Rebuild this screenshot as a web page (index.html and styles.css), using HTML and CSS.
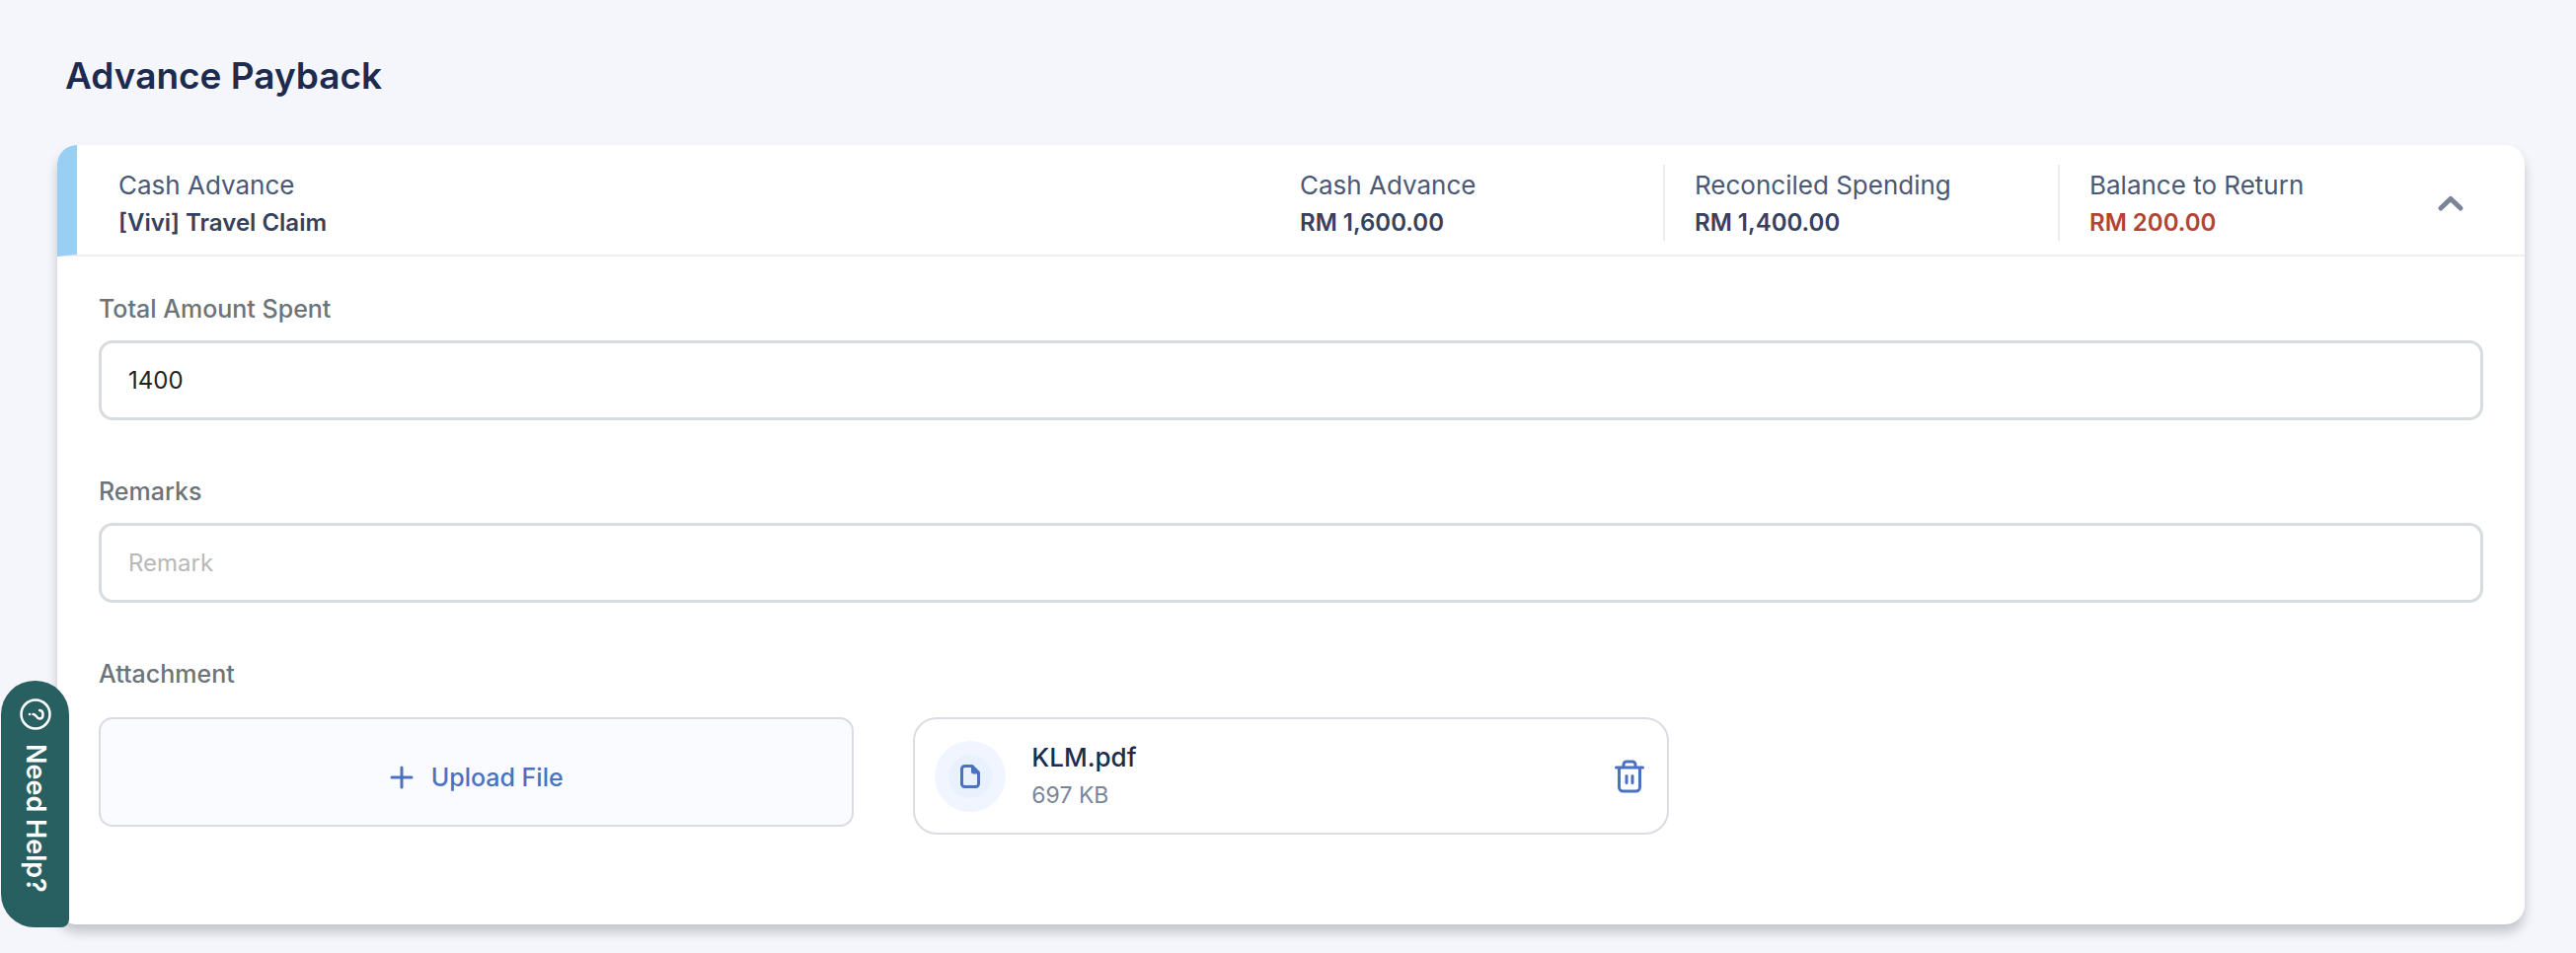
FILE: index.html
```html
<!DOCTYPE html>
<html lang="en">
<head>
<meta charset="UTF-8" />
<meta name="viewport" content="width=device-width, initial-scale=1" />
<title>Advance Payback</title>
<link rel="stylesheet" href="styles.css">
</head>
<body>
  <main class="page">
    <h1 class="page-title">Advance Payback</h1>

    <section class="card">
      <header class="card-header">
        <div class="summary summary-main">
          <span class="summary-label">Cash Advance</span>
          <strong class="summary-value">[Vivi] Travel Claim</strong>
        </div>
        <div class="summary">
          <span class="summary-label">Cash Advance</span>
          <strong class="summary-value">RM 1,600.00</strong>
        </div>
        <div class="summary divided">
          <span class="summary-label">Reconciled Spending</span>
          <strong class="summary-value">RM 1,400.00</strong>
        </div>
        <div class="summary summary-last divided">
          <span class="summary-label">Balance to Return</span>
          <strong class="summary-value negative">RM 200.00</strong>
        </div>
        <button class="icon-btn toggle-btn" type="button" aria-label="Collapse">
          <svg width="28" height="20" viewBox="0 0 28 20" fill="none" stroke="#7b8599" stroke-width="5" stroke-linecap="round" stroke-linejoin="round"><path d="M4 15 14 5.500 24 15"/></svg>
        </button>
      </header>

      <form class="card-body">
        <div class="field">
          <label for="amount">Total Amount Spent</label>
          <input type="text" id="amount" value="1400" />
        </div>
        <div class="field">
          <label for="remark">Remarks</label>
          <input type="text" id="remark" placeholder="Remark" />
        </div>

        <h2 class="attachment-title">Attachment</h2>
        <div class="attachments">
          <button class="upload-btn" type="button">
            <svg width="24" height="28" viewBox="0 0 24 28" fill="none" stroke="#4a72c0" stroke-width="3" stroke-linecap="round"><path d="M12 4v20M2 14h20"/></svg>
            Upload File
          </button>
          <div class="file">
            <span class="file-icon">
              <svg width="20" height="24" viewBox="0 0 20 24"><path d="M4 1.500h8L18.500 8v11.500a3 3 0 0 1-3 3H4.500a3 3 0 0 1-3-3v-15a3 3 0 0 1 3-3z" fill="none" stroke="#4a72c0" stroke-width="3" stroke-linejoin="round"/><path d="M11 1.500V7a2.500 2.500 0 0 0 2.500 2.500h5V8L12 1.500z" fill="#4a72c0"/></svg>
            </span>
            <div class="file-info">
              <span class="file-name">KLM.pdf</span>
              <span class="file-size">697 KB</span>
            </div>
            <button class="icon-btn" type="button" aria-label="Delete KLM.pdf">
              <svg width="30" height="34" viewBox="0 0 30 34" fill="none" stroke="#4a72c0" stroke-width="3" stroke-linecap="round" stroke-linejoin="round"><path d="M1.500 8h27M4.500 8v20a4 4 0 0 0 4 4h13a4 4 0 0 0 4-4V8M9 8V5a3 3 0 0 1 3-3h6a3 3 0 0 1 3 3v3M12 16.500v7M18 16.500v7"/></svg>
            </button>
          </div>
        </div>
      </form>
    </section>
  </main>

  <button class="help-btn" type="button">
    <svg width="32" height="32" viewBox="0 0 32 32" fill="none" stroke="#fff" stroke-width="2.500" stroke-linecap="round"><circle cx="16" cy="16" r="14.500"/><path d="M10 16h.1M13.500 16c3.500-.5 3 4.500 6.500 4.500 2.500 0 3.500-1.800 3.500-4.300 0-2.400-1.300-4-3.300-4.200" /></svg>
    <span>Need Help?</span>
  </button>
</body>
</html>
```

FILE: styles.css
```css
/* Reset & base */
* {
  box-sizing: border-box;
}
body {
  margin: 0;
  min-height: 100vh;
  font-family: Inter, 'Liberation Sans', sans-serif;
  font-size: 26px;
  line-height: 32px;
  color: #1d2b4f;
  background: #f5f6fc;
}
button,
input {
  font: inherit;
}
button {
  cursor: pointer;
}

.page {
  padding: 53px 52px 28px 58px;
}
.page-title {
  margin: 0 0 46px;
  padding-left: 8px;
  font-size: 37px;
  line-height: 48px;
  font-weight: 600;
}

/* Card */
.card {
  background: #fff;
  border-radius: 20px;
  box-shadow: 0 8px 12px rgba(0, 0, 0, 0.2);
}
.card-header {
  display: flex;
  align-items: center;
  padding: 20px 61px 14px 0;
  border-left: 20px solid #99cff2;
  border-bottom: 2px solid #f0f0f1;
  border-radius: 20px 20px 0 0;
}
.summary {
  display: flex;
  flex-direction: column;
  gap: 4px;
  width: 400px;
  height: 77px;
  padding: 3px 0 0 32px;
}
.summary-main {
  flex: 1;
  padding-left: 42px;
}
.summary-last {
  width: 384px;
}
.divided {
  padding-left: 30px;
  border-left: 2px solid #ededf0;
}
.summary-label {
  font-size: 26px;
  line-height: 36px;
  color: #4a5875;
}
.summary-value {
  font-size: 24px;
  font-weight: 600;
  color: #34415f;
}
.negative {
  color: #b04438;
}
.icon-btn {
  display: flex;
  padding: 0;
  border: none;
  background: none;
}

/* Form */
.card-body {
  padding: 37px 42px 91px;
}
.field {
  display: flex;
  flex-direction: column;
  gap: 16px;
  margin-bottom: 56px;
}
.field label,
.attachment-title {
  font-size: 25px;
  font-weight: 500;
  color: #6c7479;
}
.field input {
  width: 100%;
  height: 81px;
  padding: 0 27px;
  border: 3px solid #d7dcdf;
  border-radius: 14px;
  outline: none;
  font-size: 24px;
  color: #222;
  background: #fff;
}
.field input::placeholder {
  color: #b9b9b9;
}
.field input:focus {
  border-color: #4a72c0;
}

/* Attachments */
.attachment-title {
  margin: 0 0 28px;
}
.attachments {
  display: grid;
  grid-template-columns: repeat(3, 1fr);
  align-items: start;
  gap: 60px;
}
.upload-btn {
  display: flex;
  align-items: center;
  justify-content: center;
  gap: 18px;
  height: 111px;
  padding-top: 12px;
  border: 2px solid #dadbe5;
  border-radius: 14px;
  font-size: 25px;
  font-weight: 500;
  color: #4a72c0;
  background: #fafbff;
}
.file {
  display: flex;
  align-items: center;
  height: 119px;
  padding: 0 23px 0 20px;
  border: 2px solid #dcdce4;
  border-radius: 24px;
}
.file-icon {
  display: flex;
  align-items: center;
  justify-content: center;
  width: 72px;
  height: 72px;
  border: 14px solid #f0f5ff;
  border-radius: 50%;
  background: #e9f0fe;
}
.file-info {
  display: flex;
  flex-direction: column;
  flex: 1;
  gap: 6px;
  padding-left: 26px;
}
.file-name {
  font-weight: 500;
}
.file-size {
  font-size: 23px;
  color: #7b8599;
}

/* Help tab */
.help-btn {
  position: fixed;
  left: 1px;
  bottom: 26px;
  display: flex;
  flex-direction: column;
  align-items: center;
  gap: 14px;
  width: 69px;
  height: 250px;
  padding: 18px 0 0;
  border: none;
  border-radius: 34px 34px 8px 34px;
  font-size: 27px;
  font-weight: 600;
  color: #fff;
  background: #285f61;
}
.help-btn span {
  writing-mode: vertical-rl;
}
```
